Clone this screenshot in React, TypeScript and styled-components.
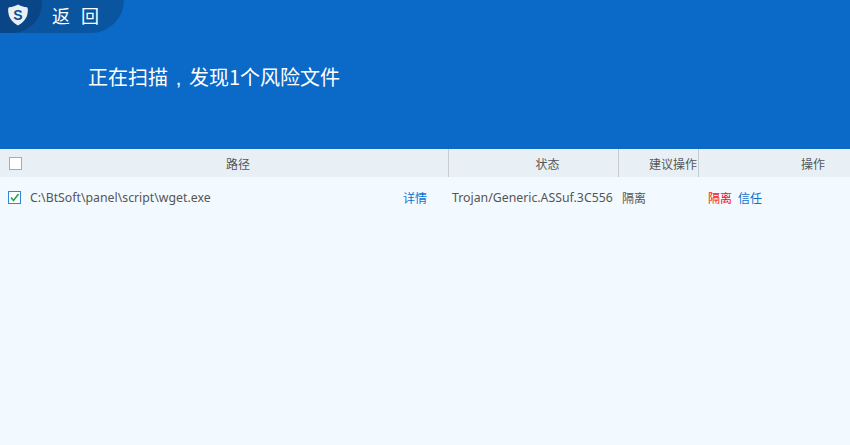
import React from "react"
import styled, { createGlobalStyle } from "styled-components"

const GlobalStyle = createGlobalStyle`
  html, body {
    margin: 0;
    padding: 0;
    background: #f3faff;
    font-family: "Noto Sans CJK SC", "Liberation Sans", sans-serif;
  }
`

const Page = styled.div`
  width: 850px;
  height: 445px;
  overflow: hidden;
  background: #f3faff;
`

const Banner = styled.header`
  height: 149px;
  background: #0b69c7;
`

const BackPill = styled.div`
  display: flex;
  align-items: center;
  width: 124px;
  height: 33px;
  background: #0a559f;
  border-bottom-right-radius: 33px;
`

const LogoBox = styled.div`
  display: flex;
  align-items: center;
  justify-content: center;
  width: 42px;
  height: 33px;
  padding: 0 6px 3px 0;
  box-sizing: border-box;
  background: #0a4687;
  border-bottom-right-radius: 30px;
`

const BackLabel = styled.span`
  margin: -2px 0 0 10px;
  color: #ffffff;
  font-size: 18px;
  letter-spacing: 3.5px;
  line-height: 33px;
`

const Title = styled.h1`
  margin: 0;
  padding: 31px 0 0 88px;
  color: #ffffff;
  font-size: 20px;
  font-weight: 400;
  line-height: 26px;
`

const TitleComma = styled.span`
  display: inline-block;
  width: 21px;
  text-align: center;
  font-family: "Liberation Sans", sans-serif;
`

const HeadRow = styled.div`
  display: grid;
  grid-template-columns: 449px 170px 80px 151px;
  height: 28px;
  background: #e8f0f6;
`

const HeadCell = styled.div<{ $align?: string; $left?: number; $right?: number; $divider?: boolean }>`
  display: flex;
  align-items: center;
  justify-content: ${(p) => p.$align || "center"};
  padding-left: ${(p) => p.$left || 0}px;
  padding-right: ${(p) => p.$right || 0}px;
  box-sizing: border-box;
  border-right: ${(p) => (p.$divider ? "1px solid #c6ccd0" : "none")};
  color: #555555;
  font-size: 12px;
  white-space: nowrap;
`

const PathHead = styled(HeadCell)`
  padding-left: 9px;
  justify-content: flex-start;
`

const HeadLabel = styled.span`
  margin-left: 204px;
`

const EmptyCheck = styled.span`
  display: block;
  width: 11px;
  height: 11px;
  border: 1px solid #aaaaaa;
  background: #ffffff;
`

const Row = styled.div`
  display: flex;
  align-items: center;
  height: 40px;
  color: #555555;
  font-size: 12px;
  white-space: nowrap;
`

const CheckedBox = styled.span`
  display: flex;
  align-items: center;
  justify-content: center;
  flex: none;
  width: 11px;
  height: 11px;
  margin-left: 8px;
  border: 1px solid #2f86dc;
  background: #ffffff;
`

const PathCell = styled.span`
  width: 373px;
  margin-left: 9px;
  font-family: "Noto Sans", "Liberation Sans", sans-serif;
  font-size: 12.3px;
`

const LinkText = styled.a<{ $danger?: boolean }>`
  color: ${(p) => (p.$danger ? "#f50f0f" : "#0b72d2")};
  text-decoration: none;
`

const DetailCell = styled.span`
  width: 49px;
`

const StatusCell = styled.span`
  width: 170px;
  font-family: "Noto Sans", "Liberation Sans", sans-serif;
  font-size: 12.3px;
`

const AdviceCell = styled.span`
  width: 86px;
`

const Actions = styled.span`
  display: flex;
  gap: 6px;
`

const ShieldLogo = () => (
  <svg width="20" height="22" viewBox="0 0 20 22">
    <path
      d="M10 .5 C12.5 2 15.5 3 19 3.3 C20 4 20 6 19.6 9 C19 14 15.5 18.5 10 21.5 C4.5 18.5 1 14 .4 9 C0 6 0 4 1 3.3 C4.5 3 7.5 2 10 .5Z"
      fill="#e9eff5"
    />
    <text x="10" y="15.5" fontSize="14" fontWeight="700" fill="#0a4f96" textAnchor="middle" fontFamily="Liberation Sans, sans-serif">
      S
    </text>
  </svg>
)

const App: React.FC = () => {
  return (
    <Page>
      <GlobalStyle />
      <Banner>
        <BackPill>
          <LogoBox>
            <ShieldLogo />
          </LogoBox>
          <BackLabel>返 回</BackLabel>
        </BackPill>
        <Title>
          正在扫描<TitleComma>,</TitleComma>发现1个风险文件
        </Title>
      </Banner>

      <HeadRow>
        <PathHead $divider>
          <EmptyCheck />
          <HeadLabel>路径</HeadLabel>
        </PathHead>
        <HeadCell $divider $left={28}>状态</HeadCell>
        <HeadCell $divider $align="flex-end" $right={1}>建议操作</HeadCell>
        <HeadCell $align="flex-end" $right={25}>操作</HeadCell>
      </HeadRow>

      <Row>
        <CheckedBox>
          <svg width="11" height="11" viewBox="0 0 11 11">
            <path d="M2 5.5 L4.5 8.5 L9.5 2" fill="none" stroke="#1fa64a" strokeWidth="1.6" />
          </svg>
        </CheckedBox>
        <PathCell>C:\BtSoft\panel\script\wget.exe</PathCell>
        <DetailCell>
          <LinkText>详情</LinkText>
        </DetailCell>
        <StatusCell>Trojan/Generic.ASSuf.3C556</StatusCell>
        <AdviceCell>隔离</AdviceCell>
        <Actions>
          <LinkText $danger>隔离</LinkText>
          <LinkText>信任</LinkText>
        </Actions>
      </Row>
    </Page>
  )
}

export default App
